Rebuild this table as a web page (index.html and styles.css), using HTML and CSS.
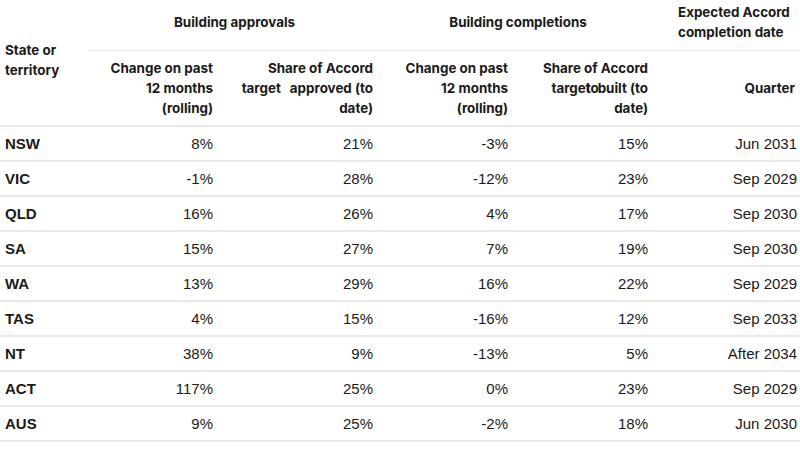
FILE: index.html
```html
<!DOCTYPE html>
<html lang="en">
<head>
<meta charset="utf-8">
<link rel="stylesheet" href="styles.css">
</head>
<body>
<table class="tbl">
  <colgroup>
    <col class="c0"><col class="c1"><col class="c2"><col class="c3"><col class="c4"><col class="c5">
  </colgroup>
  <thead>
    <tr class="hr1">
      <th rowspan="2" class="state-h">State or<br>territory</th>
      <th colspan="2" class="group">Building approvals</th>
      <th colspan="2" class="group">Building completions</th>
      <th class="expected">Expected Accord<br>completion date</th>
    </tr>
    <tr class="hr2">
      <th class="num">Change on past<br>12 months<br>(rolling)</th>
      <th class="num">Share of Accord<br>target<span class="gap"></span>approved (to<br>date)</th>
      <th class="num">Change on past<br>12 months<br>(rolling)</th>
      <th class="num">Share of Accord<br>targe<span class="ovt">t</span><span class="ov">to</span>built (to<br>date)</th>
      <th class="num">Quarter</th>
    </tr>
  </thead>
  <tbody>
    <tr><td class="st">NSW</td><td>8%</td><td>21%</td><td>-3%</td><td>15%</td><td>Jun 2031</td></tr>
    <tr><td class="st">VIC</td><td>-1%</td><td>28%</td><td>-12%</td><td>23%</td><td>Sep 2029</td></tr>
    <tr><td class="st">QLD</td><td>16%</td><td>26%</td><td>4%</td><td>17%</td><td>Sep 2030</td></tr>
    <tr><td class="st">SA</td><td>15%</td><td>27%</td><td>7%</td><td>19%</td><td>Sep 2030</td></tr>
    <tr><td class="st">WA</td><td>13%</td><td>29%</td><td>16%</td><td>22%</td><td>Sep 2029</td></tr>
    <tr><td class="st">TAS</td><td>4%</td><td>15%</td><td>-16%</td><td>12%</td><td>Sep 2033</td></tr>
    <tr><td class="st">NT</td><td>38%</td><td>9%</td><td>-13%</td><td>5%</td><td>After 2034</td></tr>
    <tr><td class="st">ACT</td><td>117%</td><td>25%</td><td>0%</td><td>23%</td><td>Sep 2029</td></tr>
    <tr><td class="st">AUS</td><td>9%</td><td>25%</td><td>-2%</td><td>18%</td><td>Jun 2030</td></tr>
  </tbody>
</table>
</body>
</html>
```
FILE: styles.css
```css
html, body {
  margin: 0;
  padding: 0;
  background: #ffffff;
}
body {
  width: 800px;
  height: 450px;
  overflow: hidden;
  color: #1a1a1a;
}
.tbl {
  width: 800px;
  border-collapse: collapse;
  table-layout: fixed;
}
.c0 { width: 88px; }
.c1 { width: 130px; }
.c2 { width: 160px; }
.c3 { width: 135px; }
.c4 { width: 140px; }
.c5 { width: 147px; }

th {
  font-family: Inter, "Liberation Sans", sans-serif;
  font-weight: 700;
  font-size: 13.4px;
  line-height: 20px;
  color: #1a1a1a;
  padding: 0 5px 0 0;
  vertical-align: middle;
}
.hr1 {
  height: 50px;
}
.hr1 th {
  padding-bottom: 6px;
  border-bottom: 1px solid #e6e6e6;
}
.hr1 .state-h {
  text-align: left;
  padding-left: 5px;
  padding-bottom: 6px;
  border-bottom: 2px solid #e8e8e8;
}
.group {
  text-align: center;
}
.group:nth-child(2) {
  padding-left: 8px;
}
.group:nth-child(3) {
  padding-left: 10px;
}
.expected {
  text-align: left;
  padding-left: 25px;
}
.hr2 {
  height: 76px;
}
.hr2 th {
  border-bottom: 2px solid #e8e8e8;
}
.num {
  text-align: right;
}
.gap {
  display: inline-block;
  width: 9px;
}
.ovt {
  margin-right: -5px;
}
.ov {
  margin-right: -1px;
}
td {
  font-family: "Liberation Sans", Arial, sans-serif;
  font-size: 15px;
  color: #1a1a1a;
  height: 33px;
  padding: 0 5px 0 0;
  text-align: right;
  border-bottom: 2px solid #e8e8e8;
  vertical-align: middle;
}
td:last-child {
  padding-right: 3px;
}
.st {
  font-weight: 700;
  text-align: left;
  padding-left: 5px;
}
```
